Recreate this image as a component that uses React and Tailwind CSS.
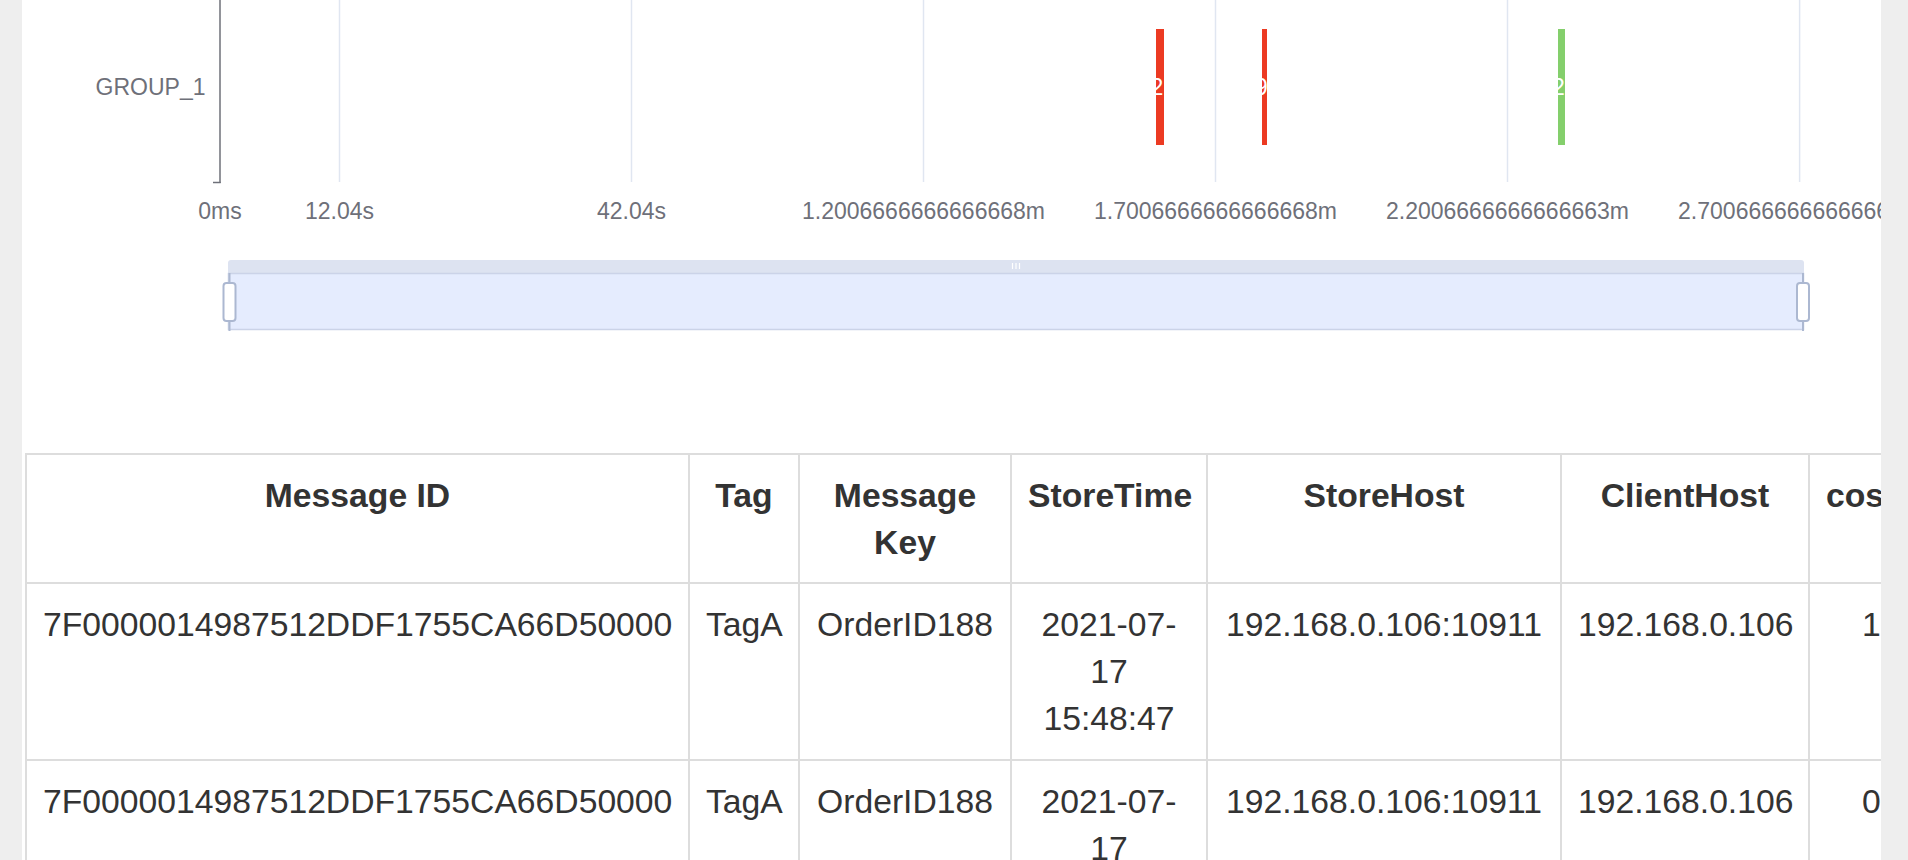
import React from "react";

const ticks = [
  { x: 198, label: "0ms" },
  { x: 317.5, label: "12.04s" },
  { x: 609.5, label: "42.04s" },
  { x: 901.5, label: "1.2006666666666668m" },
  { x: 1193.5, label: "1.7006666666666668m" },
  { x: 1485.5, label: "2.2006666666666663m" },
  { x: 1777.6, label: "2.7006666666666668m" },
];

const bars = [
  { x: 1134, w: 8, color: "#ec3a22", label: "2" },
  { x: 1240, w: 5, color: "#ec3a22", label: "9" },
  { x: 1536, w: 7, color: "#84cf6c", label: "2" },
];

const rows = [
  {
    id: "7F0000014987512DDF1755CA66D50000",
    tag: "TagA",
    key: "OrderID188",
    storeHost: "192.168.0.106:10911",
    clientHost: "192.168.0.106",
    cost: "12ms",
  },
  {
    id: "7F0000014987512DDF1755CA66D50000",
    tag: "TagA",
    key: "OrderID188",
    storeHost: "192.168.0.106:10911",
    clientHost: "192.168.0.106",
    cost: "0ms",
  },
];

const font = "'Liberation Sans', Arial, sans-serif";

function TraceChart() {
  return (
    <svg width="1859" height="453" className="block" style={{ fontFamily: font }}>
      {/* grid */}
      {ticks.slice(1).map((t) => (
        <line key={t.x} x1={t.x} x2={t.x} y1="0" y2="182" stroke="#e0e6f1" strokeWidth="1.5" />
      ))}
      {/* y axis */}
      <line x1="198" x2="198" y1="0" y2="183" stroke="#6e7079" strokeWidth="1.5" />
      <line x1="191" x2="198.7" y1="182.5" y2="182.5" stroke="#6e7079" strokeWidth="1.5" />
      <text x="183.5" y="95" textAnchor="end" fontSize="23" fill="#6e7079">
        GROUP_1
      </text>

      {/* bars */}
      {bars.map((b) => (
        <g key={b.x}>
          <rect x={b.x} y="29" width={b.w} height="116" fill={b.color} />
          <text x={b.x + b.w / 2 - 3} y="95" textAnchor="middle" fontSize="23" fill="#ffffff">
            {b.label}
          </text>
        </g>
      ))}

      {/* x labels */}
      {ticks.map((t) => (
        <text key={t.label} x={t.x} y="219" textAnchor="middle" fontSize="23" fill="#6e7079">
          {t.label}
        </text>
      ))}

      {/* data zoom */}
      <path d="M206 273 V263 Q206 260 209 260 H1779 Q1782 260 1782 263 V273 Z" fill="#dde3f1" />
      <rect x="206.5" y="273.5" width="1575" height="56" fill="#e5ecfe" stroke="#cbd3e8" strokeWidth="1.5" />
      <line x1="990.5" x2="990.5" y1="263" y2="269" stroke="#ffffff" strokeWidth="1.2" />
      <line x1="994" x2="994" y1="263" y2="269" stroke="#ffffff" strokeWidth="1.2" />
      <line x1="997.5" x2="997.5" y1="263" y2="269" stroke="#ffffff" strokeWidth="1.2" />
      {[207.5, 1781].map((hx) => (
        <g key={hx}>
          <line x1={hx} x2={hx} y1="273" y2="331" stroke="#acb8d1" strokeWidth="2" />
          <rect x={hx - 6} y="283" width="12" height="38" rx="3" fill="#ffffff" stroke="#acb8d1" strokeWidth="2" />
        </g>
      ))}
    </svg>
  );
}

function MessageTable() {
  const th = "border-2 border-[#dddddd] px-[16px] pt-[17px] pb-[16px] align-top text-center font-bold whitespace-nowrap";
  const td = "border-2 border-[#dddddd] px-[16px] py-[17px] align-top text-center whitespace-nowrap";
  return (
    <table
      className="ml-[3px] table-fixed border-collapse text-[33.7px] leading-[47px] text-[#333333]"
      style={{ fontFamily: font, width: "2000px" }}
    >
      <colgroup>
        <col className="w-[663px]" />
        <col className="w-[110px]" />
        <col className="w-[212px]" />
        <col className="w-[196px]" />
        <col className="w-[354px]" />
        <col className="w-[248px]" />
        <col className="w-[217px]" />
      </colgroup>
      <thead>
        <tr>
          <th className={th}>Message ID</th>
          <th className={th}>Tag</th>
          <th className={th}>
            Message
            <br />
            Key
          </th>
          <th className={th}>StoreTime</th>
          <th className={th}>StoreHost</th>
          <th className={th}>ClientHost</th>
          <th className={th + " !text-left"}>costTime</th>
        </tr>
      </thead>
      <tbody>
        {rows.map((r, i) => (
          <tr key={i}>
            <td className={td}>{r.id}</td>
            <td className={td}>{r.tag}</td>
            <td className={td}>{r.key}</td>
            <td className="border-2 border-[#dddddd] px-[16px] py-[17px] align-top text-center">
              2021-07-
              <br />
              17
              <br />
              15:48:47
            </td>
            <td className={td}>{r.storeHost}</td>
            <td className={td}>{r.clientHost}</td>
            <td className={td + " !text-left !pl-[52px]"}>{r.cost}</td>
          </tr>
        ))}
      </tbody>
    </table>
  );
}

export default function App() {
  return (
    <div className="flex h-[860px] w-full overflow-hidden bg-[#eeeeee]">
      <div className="ml-[22px] w-[1859px] shrink-0 overflow-hidden bg-white">
        <TraceChart />
        <MessageTable />
      </div>
    </div>
  );
}
